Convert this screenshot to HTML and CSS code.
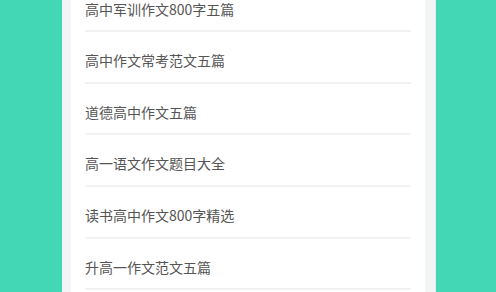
FILE: index.html
```html
<!DOCTYPE html>
<html lang="zh-CN">
<head>
    <meta charset="UTF-8">
    <meta name="viewport" content="width=device-width, initial-scale=1.0">
    <title>高中作文</title>
    <link rel="stylesheet" href="styles.css">
</head>
<body>
    <div class="page">
        <div class="panel">
            <ul class="list">
                <li class="item">高中军训作文800字五篇</li>
                <li class="item">高中作文常考范文五篇</li>
                <li class="item">道德高中作文五篇</li>
                <li class="item">高一语文作文题目大全</li>
                <li class="item">读书高中作文800字精选</li>
                <li class="item">升高一作文范文五篇</li>
            </ul>
        </div>
    </div>
</body>
</html>
```

FILE: styles.css
```css
html, body {
    margin: 0;
    padding: 0;
    height: 100%;
    overflow: hidden;
}
body {
    background: #44d7b5;
    font-family: "Noto Sans CJK SC", "Noto Sans", sans-serif;
}
.page {
    margin: 0 60px 0 62px;
    height: 100%;
    background: #f3f4f6;
    padding: 0 10px 0 9px;
    border-right: 1px solid #e6e8eb;
    box-sizing: border-box;
}
.panel {
    background: #fff;
    height: 100%;
    padding: 0 14px;
    overflow: hidden;
}
.list {
    list-style: none;
    margin: -19.4px 0 0 0;
    padding: 0;
}
.item {
    padding: 19px 0 12.6px;
    line-height: 18px;
    font-size: 14px;
    color: #555;
    border-bottom: 2px solid #f2f2f2;
}
```
